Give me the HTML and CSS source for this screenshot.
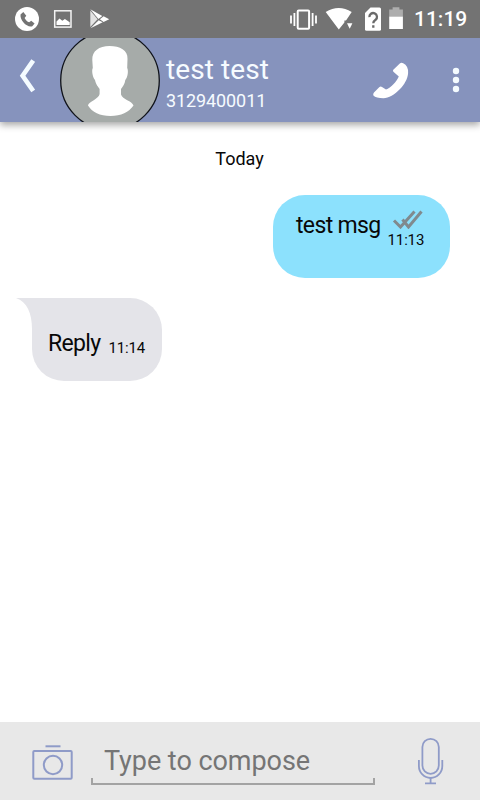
FILE: index.html
```html
<!DOCTYPE html>
<html lang="en">
<head>
    <meta charset="UTF-8">
    <meta name="viewport" content="width=device-width, initial-scale=1.0">
    <title>Chat - test test</title>
    <link rel="stylesheet" href="styles.css">
</head>
<body>
    <div class="phone">
        <div class="status-bar">
            <!-- call, picture and play store notifications -->
            <svg class="status-left" width="96" height="38" viewBox="15 0 96 38">
                <circle cx="27" cy="19" r="12" fill="#fff"/>
                <path d="M20.500 14.500 l2.800-2.600 3 3.800 -1.700 2.200 c1.200 2.400 2.600 3.500 4.600 4.300 l2-1.400 3.400 2.600 -2.300 2.800 c-5.200 1.600-12.400-5.400-11.800-11.700z" fill="#737373"/>
                <rect x="54.700" y="10.800" width="16.300" height="16.300" fill="none" stroke="#f4f4f4" stroke-width="1.500"/>
                <path d="M56.500 25 v-3.500 l3-3 2.800 2.300 2.600-1.800 4.800 3.300 V25z" fill="#fff"/>
                <path d="M90.300 9.300 L102.300 16 98.400 18.900z" fill="#fff"/>
                <path d="M90.300 10.500 V27 L97.600 19.200z" fill="#e4e4e4"/>
                <path d="M90.500 28.200 L98.700 20.200 102.700 22.200z" fill="#fff"/>
                <path d="M103.600 16.300 L109.200 19.300 103.600 22 99.900 19.200z" fill="#fff"/>
            </svg>
            <!-- vibrate, wifi, sim and battery -->
            <svg class="status-right" width="115" height="38" viewBox="289 0 115 38">
                <rect x="297.700" y="10.400" width="11.400" height="18.400" rx="1" fill="none" stroke="#fff" stroke-width="2"/>
                <path d="M294.400 13 V26 M291 15.500 V23.500 M312.600 13 V26 M316 15.500 V23.500" stroke="#fff" stroke-width="1.800"/>
                <path d="M325.700 12 Q338.700 4 351.700 12 L346 20.500 H344.400 V22.600 L338.800 29.500z" fill="#fff"/>
                <path d="M347 23.300 h5.400 l-2.700 5.400z" fill="#fff"/>
                <path d="M370.500 7.500 H379.500 a1.500 1.500 0 0 1 1.500 1.500 V29.300 a1.500 1.500 0 0 1 -1.500 1.500 H366.500 a1.500 1.500 0 0 1 -1.500 -1.500 V13z" fill="#fff"/>
                <path d="M369.400 17.200 a3.800 3.800 0 1 1 6.200 2.600 q-2.300 1.600-2.300 3.500 M373.300 25.300 v2.500" fill="none" stroke="#6a6a6a" stroke-width="2.300"/>
                <path d="M389.200 17 V9.500 H392.600 V7.200 H399.400 V9.500 H402.900 V17z" fill="#adadad"/>
                <path d="M389.200 16.700 H402.900 V29 H389.200z" fill="#fff"/>
            </svg>
            <span class="clock">11:19</span>
        </div>

        <header class="chat-header">
            <svg class="back" width="18" height="38" viewBox="0 0 18 38">
                <path d="M16.200 3.500 L5.600 18.700 16.200 34" fill="none" stroke="#f4fbff" stroke-width="4.600"/>
            </svg>
            <svg class="avatar" width="100" height="84" viewBox="60 38 100 84">
                <circle cx="110" cy="80.500" r="49.300" fill="#a6aba9" stroke="#10131a" stroke-width="1.300"/>
                <path d="M109.500 46 C99 46 92 51 92.300 60 L92.800 68 C91.500 70 92.500 77 95 80 C96 85 98.500 87 99.600 89 L99.600 94 C99 99 88.500 101.500 88 105.500 C92 112 100 116 110.500 116 C121 116 129 112 133.500 105.500 C132 101 122.500 99.500 121 94.500 L121 89 C123 86.500 124.800 84 125.300 80 C128 77 128.500 70.500 127.200 68 L127.500 59 C128 50 120 46 109.500 46z" fill="#fff"/>
            </svg>
            <div class="contact">
                <div class="contact-name">test test</div>
                <div class="contact-number">3129400011</div>
            </div>
            <svg class="call" width="38" height="38" viewBox="372 62 38 38">
                <path d="M393.300 69.800 L399.800 63.400 Q401.500 62.300 403.200 63.300 Q408.500 66 408.100 73 C407.600 84 394 97.800 383.500 98.200 Q376 98.200 373.400 95.500 Q372.700 94 374 92.500 L379.200 87.200 Q380.600 85.800 382 86.900 L386 89.600 C391 87.500 396.500 82 398.800 76.500 L393.700 72 Q392.300 71 393.300 69.800z" fill="#fff"/>
            </svg>
            <svg class="menu" width="8" height="26" viewBox="0 0 8 26">
                <circle cx="4" cy="4" r="3.200" fill="#f4fbff"/>
                <circle cx="4" cy="13" r="3.200" fill="#f4fbff"/>
                <circle cx="4" cy="22" r="3.200" fill="#f4fbff"/>
            </svg>
        </header>

        <main class="messages">
            <div class="day">Today</div>

            <div class="bubble sent">
                <span class="text">test msg</span>
                <div class="meta">
                    <svg class="ticks" width="32" height="20" viewBox="392 209 32 20">
                        <path d="M394 220.500 L400.500 227 414.500 211.500 M402.500 219.500 L408.500 227 421.500 211.500" fill="none" stroke="#808a8e" stroke-width="3"/>
                    </svg>
                    <span class="time">11:13</span>
                </div>
            </div>

            <div class="bubble received">
                <svg class="tail" width="17" height="48" viewBox="0 0 17 48">
                    <path d="M0 0 H17 V48 H16 V31 C16 15 11 4 0 0z" fill="#e4e4e9"/>
                </svg>
                <span class="text">Reply</span>
                <span class="time">11:14</span>
            </div>
        </main>

        <footer class="composer">
            <svg class="camera" width="42" height="38" viewBox="32 744 42 38">
                <g fill="none" stroke="#8f9bc8" stroke-width="2">
                    <rect x="33.300" y="751" width="38.400" height="27.700" rx="1"/>
                    <circle cx="53" cy="765" r="9.200"/>
                    <path d="M45.500 746.300 H60.500"/>
                </g>
            </svg>
            <div class="field">
                <input type="text" class="field-input" placeholder="Type to compose">
                <div class="field-line"></div>
            </div>
            <svg class="mic" width="28" height="50" viewBox="416 736 28 50">
                <g fill="none" stroke="#8f9bc8" stroke-width="1.800">
                    <rect x="422.400" y="738.800" width="16.400" height="35" rx="8.200"/>
                    <path d="M418.900 760 V766 a11.700 12 0 0 0 23.400 0 V760"/>
                    <path d="M430.600 778 V783 M425 783.300 H436"/>
                </g>
            </svg>
        </footer>
    </div>
</body>
</html>
```

FILE: styles.css
```css
* {
    box-sizing: border-box;
}
body {
    margin: 0;
    font-family: Roboto, sans-serif;
    background: #fff;
    color: #080808;
}
svg {
    display: block;
    flex-shrink: 0;
}
.phone {
    width: 480px;
    height: 800px;
    display: flex;
    flex-direction: column;
    overflow: hidden;
}
.status-bar {
    position: relative;
    z-index: 1;
    height: 38px;
    display: flex;
    align-items: center;
    padding-left: 15px;
    background: #737373;
    color: #fff;
}
.status-right {
    margin-left: 178px;
}
.clock {
    margin-left: 10px;
    font-size: 21px;
    font-weight: 500;
    line-height: 38px;
}

/* header */
.chat-header {
    height: 84px;
    flex-shrink: 0;
    display: flex;
    background: #8693bd;
    color: #f6fbff;
    box-shadow: 0 3px 7px rgba(0, 0, 0, 0.35);
}
.back {
    margin: 19px 25px 0 17px;
}
.contact {
    width: 206px;
    padding: 14px 0 0 6px;
}
.contact-name {
    font-size: 28px;
    line-height: 36px;
    letter-spacing: 0.1px;
}
.contact-number {
    font-size: 18px;
    line-height: 26px;
    letter-spacing: -0.1px;
}
.call {
    margin: 24px 42px 0 6px;
}
.menu {
    margin-top: 29px;
}

/* messages */
.messages {
    flex: 1;
    display: flex;
    flex-direction: column;
    padding: 26px 30px 0 32px;
}
.day {
    height: 47px;
    padding-right: 3px;
    font-size: 18px;
    line-height: 22px;
    text-align: center;
}
.bubble {
    height: 83px;
    display: flex;
    border-radius: 32px;
}
.text {
    font-size: 23px;
    line-height: 28px;
    letter-spacing: -0.65px;
    white-space: nowrap;
}
.time {
    font-size: 15px;
    line-height: 18px;
    letter-spacing: -0.15px;
}
.sent {
    align-self: flex-end;
    width: 177px;
    padding: 17px 0 0 23px;
    background: #8ce1fd;
}
.meta {
    margin-left: 7px;
}
.ticks {
    margin: -3px 0 2px 4px;
}
.meta .time {
    display: block;
}
.received {
    position: relative;
    width: 130px;
    margin-top: 20px;
    padding: 32px 0 0 16px;
    border-top-left-radius: 0;
    background: #e4e4e9;
}
.received .time {
    margin: 9px 0 0 8px;
}
/* tail sticks out of the top left corner */
.tail {
    position: absolute;
    top: 0;
    left: -16px;
}

/* composer */
.composer {
    height: 78px;
    display: flex;
    padding-left: 32px;
    background: #e8e8e8;
}
.camera {
    margin-top: 22px;
}
.field {
    width: 284px;
    margin: 18px 41px 0 17px;
}
.field-input {
    display: block;
    width: 100%;
    height: 38px;
    padding: 4px 13px 0;
    border: none;
    outline: none;
    background: none;
    font-family: inherit;
    font-size: 27px;
    letter-spacing: -0.05px;
}
.field-input::placeholder {
    color: #757575;
    opacity: 1;
}
.field-line {
    height: 7px;
    border: 2px solid #a3a3a3;
    border-top: none;
}
.mic {
    margin-top: 14px;
}
```
